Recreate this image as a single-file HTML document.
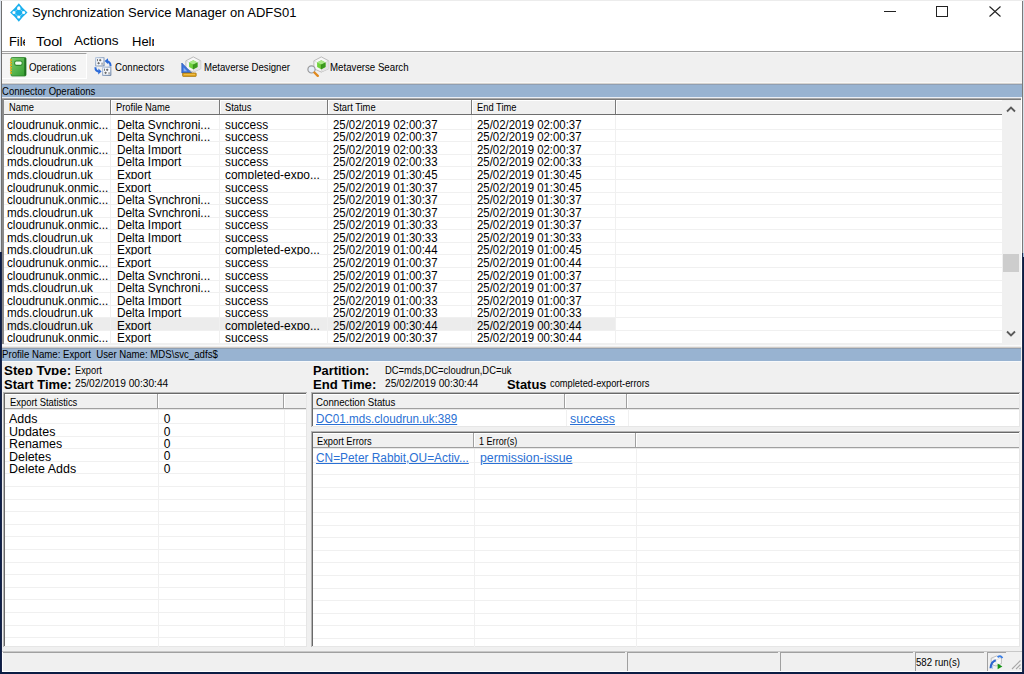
<!DOCTYPE html>
<html><head><meta charset="utf-8"><style>
html,body{margin:0;padding:0;}
body{width:1024px;height:674px;position:relative;overflow:hidden;background:#0c1e46;font-family:"Liberation Sans", sans-serif;}
body div, body svg{position:absolute;}
.t{white-space:pre;}
</style></head><body>
<div style="left:0;top:0;width:1px;height:252px;background:#dce3ec"></div>
<div style="left:1023px;top:0;width:1px;height:253px;background:#d6e0ea"></div>
<div style="left:1023px;top:253px;width:1px;height:4px;background:#9fbfe0"></div>
<div style="left:1px;top:0px;width:1022px;height:672px;background:#f0f0f0"></div>
<div style="left:1px;top:0px;width:1022px;height:1px;background:#ececec"></div>
<div style="left:1px;top:1px;width:1px;height:251px;background:#6f6f6f"></div>
<div style="left:1px;top:252px;width:1px;height:420px;background:#1a2548"></div>
<div style="left:1022px;top:1px;width:1px;height:252px;background:#7a7a7a"></div>
<div style="left:1022px;top:253px;width:1px;height:419px;background:#1f2a4a"></div>
<div style="left:2px;top:1px;width:1020px;height:50px;background:#fff"></div>
<svg style="left:10px;top:2.7px" width="18" height="19" viewBox="0 0 18 19">
<path d="M8.8 0.3 Q12.6 5.3 17.5 9.6 Q12.6 13.9 8.8 18.7 Q5 13.9 0.1 9.6 Q5 5.3 8.8 0.3 Z" fill="#1bb0ee"/>
<path d="M8.8 5.2 L13.8 9.6 L8.8 14.1 L3.8 9.6 Z" fill="none" stroke="#fff" stroke-width="0.6" opacity="0.8"/>
<ellipse cx="8.8" cy="9.6" rx="2.7" ry="2.0" fill="#1bb0ee"/>
<ellipse cx="8.8" cy="5.2" rx="1.6" ry="1.9" fill="#fff"/><circle cx="3.9" cy="9.6" r="1.5" fill="#fff"/>
<circle cx="13.7" cy="9.6" r="1.5" fill="#fff"/><circle cx="8.8" cy="14" r="1.6" fill="#fff"/>
</svg>
<div class="t" style="left:32.20px;top:6px;font-size:13px;line-height:14.521px;color:#000;transform:scaleX(0.9997);transform-origin:0 0;">Synchronization Service Manager on ADFS01</div>
<div style="left:884px;top:11px;width:12px;height:1px;background:#222"></div>
<div style="left:936px;top:6px;width:10px;height:9px;border:1px solid #222"></div>
<svg style="left:989px;top:6px" width="12" height="11" viewBox="0 0 12 11"><path d="M0.5 0.5 L11.5 10.5 M11.5 0.5 L0.5 10.5" stroke="#222" stroke-width="1.1"/></svg>
<div style="left:8px;top:30px;width:16.6px;height:15.5px;overflow:hidden">
<div class="t" style="left:0.9px;top:5px;font-size:13px;line-height:14.521px;color:#000;">File</div>
</div>
<div style="left:36px;top:30px;width:25.6px;height:15.5px;overflow:hidden">
<div class="t" style="left:0.24px;top:5px;font-size:13px;line-height:14.521px;color:#000;transform:scaleX(1.1028);transform-origin:0 0;">Tools</div>
</div>
<div class="t" style="left:74.17px;top:34px;font-size:13px;line-height:14.521px;color:#000;transform:scaleX(1.0438);transform-origin:0 0;">Actions</div>
<div style="left:131px;top:30px;width:23px;height:15.5px;overflow:hidden">
<div class="t" style="left:1px;top:5px;font-size:13px;line-height:14.521px;color:#000;">Help</div>
</div>
<div style="left:2px;top:51px;width:1020px;height:1px;background:#a0a0a0"></div>
<div style="left:2px;top:52px;width:1020px;height:1px;background:#f7f7f7"></div>
<div style="left:2px;top:53px;width:1020px;height:30px;background:#f0f0f0"></div>
<div style="left:2px;top:53px;width:85px;height:26px;background:#f5f5f5;border-top:1px solid #a0a0a0;border-right:1px solid #fff;border-bottom:1px solid #fff;box-sizing:border-box"></div>
<div style="left:2px;top:82px;width:1020px;height:1px;background:#f7f7f7"></div>
<div style="left:2px;top:83px;width:1020px;height:1px;background:#d6d3cf"></div>
<div style="left:2px;top:84px;width:1020px;height:1px;background:#909fb2"></div>
<svg style="left:9px;top:57px" width="18" height="20" viewBox="0 0 18 20">
<defs><linearGradient id="gN" x1="0" y1="0" x2="1" y2="1"><stop offset="0" stop-color="#7fcf6f"/><stop offset="1" stop-color="#2f9a2c"/></linearGradient></defs>
<rect x="2" y="0.5" width="15" height="18.5" rx="1.2" fill="url(#gN)" stroke="#2a7f28" stroke-width="0.8"/>
<rect x="15.3" y="1" width="1.6" height="17.5" fill="#1f6e1f"/>
<rect x="5.6" y="4" width="7.6" height="4.4" rx="1.8" fill="#f4fff0" stroke="#2f8a2c" stroke-width="1.1"/>
<g fill="#e2b21c"><circle cx="2" cy="3" r="1.1"/><circle cx="2" cy="5.6" r="1.1"/><circle cx="2" cy="8.2" r="1.1"/><circle cx="2" cy="10.8" r="1.1"/><circle cx="2" cy="13.4" r="1.1"/><circle cx="2" cy="16" r="1.1"/></g>
</svg>
<div class="t" style="left:29.47px;top:61px;font-size:11px;line-height:12.287px;color:#000;transform:scaleX(0.8772);transform-origin:0 0;">Operations</div>
<svg style="left:93px;top:56px" width="20" height="21" viewBox="0 0 20 21">
<defs><linearGradient id="gC" x1="0" y1="0" x2="1" y2="1"><stop offset="0" stop-color="#c4d2e6"/><stop offset="1" stop-color="#6f86a6"/></linearGradient></defs>
<rect x="2" y="1" width="9.6" height="9.6" rx="1" fill="url(#gC)"/><rect x="3.2" y="2.2" width="7.2" height="7.2" fill="#f5f8fc"/>
<rect x="9" y="10.6" width="9.4" height="9.4" rx="1" fill="url(#gC)"/><rect x="10.2" y="11.8" width="7" height="7" fill="#f5f8fc"/>
<g fill="#6a6a6a"><path d="M7.2 2.8 L8.6 4.2 L7.2 5.6 L5.8 4.2 Z"/><path d="M5.6 5.8 L7 7.2 L5.6 8.6 L4.2 7.2 Z"/><rect x="4" y="3" width="0.9" height="2.2"/><rect x="8.6" y="6.6" width="0.9" height="2.2"/>
<path d="M14.2 12.4 L15.6 13.8 L14.2 15.2 L12.8 13.8 Z"/><path d="M12.6 15.4 L14 16.8 L12.6 18.2 L11.2 16.8 Z"/><rect x="11" y="12.6" width="0.9" height="2.2"/><rect x="15.6" y="16.2" width="0.9" height="2.2"/></g>
<path d="M13.5 5.2 Q17.6 5.6 17.6 10.2" fill="none" stroke="#2b6ad8" stroke-width="2"/><path d="M11.6 5.1 L15 2.2 L15.2 8.2 Z" fill="#2b6ad8"/>
<path d="M2.4 11.2 Q2.4 15.4 6.6 15.6" fill="none" stroke="#2b6ad8" stroke-width="2"/><path d="M8.6 15.6 L5.4 12.6 L5.2 18.6 Z" fill="#2b6ad8"/>
</svg>
<div class="t" style="left:114.97px;top:61px;font-size:11px;line-height:12.287px;color:#000;transform:scaleX(0.8764);transform-origin:0 0;">Connectors</div>
<svg style="left:180px;top:55px" width="22" height="23" viewBox="0 0 22 23">
<g transform="translate(5.5,1.5)">
<path d="M7.8 0.4 L15.2 4.3 L15.2 12.2 L7.8 15.6 L0.4 12.2 L0.4 4.3 Z" fill="#f7f7f7" stroke="#b4b4b4" stroke-width="0.9"/>
<path d="M15.2 4.3 L15.2 12.2 L7.8 15.6 L7.8 8 Z" fill="#e4e4e4"/>
<path d="M0.4 4.3 L7.8 8 L15.2 4.3 M7.8 8 L7.8 15.6" fill="none" stroke="#d0d0d0" stroke-width="0.6"/>
<path d="M7.8 3.8 L12 5.9 L12 10.6 L7.8 12.7 L3.6 10.6 L3.6 5.9 Z" fill="#6fd23c"/>
<path d="M7.8 3.8 L12 5.9 L7.8 8 L3.6 5.9 Z" fill="#a8e888"/><path d="M7.8 8 L12 5.9 L12 10.6 L7.8 12.7 Z" fill="#3a9a1e"/>
<path d="M7.8 8 L7.8 12.7" stroke="#2a6e14" stroke-width="0.6"/>
</g>
<path d="M1.8 8 L1.8 17.9 L11.6 17.9 Z" fill="#3c74dc" stroke="#2556b8" stroke-width="0.7"/>
<path d="M3.6 12.6 L3.6 16.3 L7.2 16.3 Z" fill="#8fb4f0"/>
<rect x="2.6" y="18" width="13.6" height="3.4" rx="0.6" fill="#e6a81e" stroke="#9a6c08" stroke-width="0.7"/>
<path d="M4 19.4 L15 19.4" stroke="#f6d070" stroke-width="0.6"/>
</svg>
<div class="t" style="left:203.78px;top:61px;font-size:11px;line-height:12.287px;color:#000;transform:scaleX(0.8737);transform-origin:0 0;">Metaverse Designer</div>
<svg style="left:306px;top:55px" width="24" height="23" viewBox="0 0 24 23">
<g transform="translate(7.5,1.5)">
<path d="M7.8 0.4 L15.2 4.3 L15.2 12.2 L7.8 15.6 L0.4 12.2 L0.4 4.3 Z" fill="#f7f7f7" stroke="#b4b4b4" stroke-width="0.9"/>
<path d="M15.2 4.3 L15.2 12.2 L7.8 15.6 L7.8 8 Z" fill="#e4e4e4"/>
<path d="M0.4 4.3 L7.8 8 L15.2 4.3 M7.8 8 L7.8 15.6" fill="none" stroke="#d0d0d0" stroke-width="0.6"/>
<path d="M7.8 3.8 L12 5.9 L12 10.6 L7.8 12.7 L3.6 10.6 L3.6 5.9 Z" fill="#6fd23c"/>
<path d="M7.8 3.8 L12 5.9 L7.8 8 L3.6 5.9 Z" fill="#a8e888"/><path d="M7.8 8 L12 5.9 L12 10.6 L7.8 12.7 Z" fill="#3a9a1e"/>
<path d="M7.8 8 L7.8 12.7" stroke="#2a6e14" stroke-width="0.6"/>
</g>
<circle cx="5.5" cy="14.4" r="3.6" fill="#e6eefa" stroke="#9a9a9a" stroke-width="1.2"/>
<path d="M8.4 17.5 L11.8 20.8" stroke="#e08a20" stroke-width="2.4" stroke-linecap="round"/>
</svg>
<div class="t" style="left:330.47px;top:61px;font-size:11px;line-height:12.287px;color:#000;transform:scaleX(0.8806);transform-origin:0 0;">Metaverse Search</div>
<div style="left:2px;top:85px;width:1020px;height:12px;background:#98b3d1"></div>
<div style="left:2px;top:85px;width:1020px;height:12px;overflow:hidden">
<div class="t" style="left:-0.12px;top:0px;font-size:11px;line-height:12.287px;color:#000;transform:scaleX(0.8670);transform-origin:0 0;">Connector Operations</div>
</div>
<div style="left:2px;top:97px;width:1020px;height:1px;background:#e9eef5"></div>
<div style="left:2px;top:98px;width:1020px;height:1px;background:#a8a8a8"></div>
<div style="left:2px;top:99px;width:1001px;height:245px;background:#fff"></div>
<div style="left:2px;top:99px;width:1019px;height:1px;background:#7a7a7a"></div>
<div style="left:2px;top:99px;width:2px;height:245px;background:#8a8a8a"></div>
<div style="left:4px;top:100px;width:999px;height:14px;background:#f0f0f0;border-top:1px solid #fff;box-sizing:border-box"></div>
<div style="left:4px;top:114px;width:998px;height:1px;background:#6e6e6e"></div>
<div style="left:110px;top:100px;width:1px;height:14px;background:#7a7a7a"></div>
<div style="left:111px;top:100px;width:1px;height:14px;background:#fff"></div>
<div style="left:219px;top:100px;width:1px;height:14px;background:#7a7a7a"></div>
<div style="left:220px;top:100px;width:1px;height:14px;background:#fff"></div>
<div style="left:327px;top:100px;width:1px;height:14px;background:#7a7a7a"></div>
<div style="left:328px;top:100px;width:1px;height:14px;background:#fff"></div>
<div style="left:471px;top:100px;width:1px;height:14px;background:#7a7a7a"></div>
<div style="left:472px;top:100px;width:1px;height:14px;background:#fff"></div>
<div style="left:615px;top:100px;width:1px;height:14px;background:#7a7a7a"></div>
<div style="left:616px;top:100px;width:1px;height:14px;background:#fff"></div>
<div class="t" style="left:8.79px;top:101px;font-size:11px;line-height:12.287px;color:#000;transform:scaleX(0.8494);transform-origin:0 0;">Name</div>
<div class="t" style="left:116.49px;top:101px;font-size:11px;line-height:12.287px;color:#000;transform:scaleX(0.8494);transform-origin:0 0;">Profile Name</div>
<div class="t" style="left:224.79px;top:101px;font-size:11px;line-height:12.287px;color:#000;transform:scaleX(0.8494);transform-origin:0 0;">Status</div>
<div class="t" style="left:332.69px;top:101px;font-size:11px;line-height:12.287px;color:#000;transform:scaleX(0.8494);transform-origin:0 0;">Start Time</div>
<div class="t" style="left:476.99px;top:101px;font-size:11px;line-height:12.287px;color:#000;transform:scaleX(0.8494);transform-origin:0 0;">End Time</div>
<div style="left:4px;top:115px;width:998px;height:228px;overflow:hidden">
<div style="left:0;top:13.68px;width:998px;height:1px;background:#f0f0f0"></div>
<div style="left:0;top:26.26px;width:998px;height:1px;background:#f0f0f0"></div>
<div style="left:0;top:38.84px;width:998px;height:1px;background:#f0f0f0"></div>
<div style="left:0;top:51.42px;width:998px;height:1px;background:#f0f0f0"></div>
<div style="left:0;top:64.00px;width:998px;height:1px;background:#f0f0f0"></div>
<div style="left:0;top:76.58px;width:998px;height:1px;background:#f0f0f0"></div>
<div style="left:0;top:89.16px;width:998px;height:1px;background:#f0f0f0"></div>
<div style="left:0;top:101.74px;width:998px;height:1px;background:#f0f0f0"></div>
<div style="left:0;top:114.32px;width:998px;height:1px;background:#f0f0f0"></div>
<div style="left:0;top:126.90px;width:998px;height:1px;background:#f0f0f0"></div>
<div style="left:0;top:139.48px;width:998px;height:1px;background:#f0f0f0"></div>
<div style="left:0;top:152.06px;width:998px;height:1px;background:#f0f0f0"></div>
<div style="left:0;top:164.64px;width:998px;height:1px;background:#f0f0f0"></div>
<div style="left:0;top:177.22px;width:998px;height:1px;background:#f0f0f0"></div>
<div style="left:0;top:189.80px;width:998px;height:1px;background:#f0f0f0"></div>
<div style="left:0;top:202.38px;width:998px;height:1px;background:#f0f0f0"></div>
<div style="left:1px;top:202.88px;width:610px;height:12.58px;background:#ececec"></div>
<div style="left:0;top:214.96px;width:998px;height:1px;background:#f0f0f0"></div>
<div style="left:0;top:227.54px;width:998px;height:1px;background:#f0f0f0"></div>
<div style="left:106px;top:0;width:1px;height:228px;background:#f0f0f0"></div>
<div style="left:215px;top:0;width:1px;height:228px;background:#f0f0f0"></div>
<div style="left:323px;top:0;width:1px;height:228px;background:#f0f0f0"></div>
<div style="left:467px;top:0;width:1px;height:228px;background:#f0f0f0"></div>
<div style="left:611px;top:0;width:1px;height:228px;background:#f0f0f0"></div>
<div style="left:2.70px;top:1.60px;width:106px;height:12.58px;overflow:hidden">
<div class="t" style="left:0.42px;top:2px;font-size:12px;line-height:13.404px;color:#000;transform:scaleX(0.9736);transform-origin:0 0;">cloudrunuk.onmic...</div>
</div>
<div style="left:112.20px;top:1.60px;width:108px;height:12.58px;overflow:hidden">
<div class="t" style="left:0.41px;top:2px;font-size:12px;line-height:13.404px;color:#000;transform:scaleX(0.9840);transform-origin:0 0;">Delta Synchroni...</div>
</div>
<div style="left:220.60px;top:1.60px;width:108px;height:12.58px;overflow:hidden">
<div class="t" style="left:0.40px;top:2px;font-size:12px;line-height:13.404px;color:#000;transform:scaleX(0.9949);transform-origin:0 0;">success</div>
</div>
<div style="left:328.20px;top:1.60px;width:144px;height:12.58px;overflow:hidden">
<div class="t" style="left:0.43px;top:2px;font-size:12px;line-height:13.404px;color:#000;transform:scaleX(0.9491);transform-origin:0 0;">25/02/2019 02:00:37</div>
</div>
<div style="left:472.50px;top:1.60px;width:144px;height:12.58px;overflow:hidden">
<div class="t" style="left:0.43px;top:2px;font-size:12px;line-height:13.404px;color:#000;transform:scaleX(0.9491);transform-origin:0 0;">25/02/2019 02:00:37</div>
</div>
<div style="left:2.70px;top:14.18px;width:106px;height:12.58px;overflow:hidden">
<div class="t" style="left:0.42px;top:2px;font-size:12px;line-height:13.404px;color:#000;transform:scaleX(0.9736);transform-origin:0 0;">mds.cloudrun.uk</div>
</div>
<div style="left:112.20px;top:14.18px;width:108px;height:12.58px;overflow:hidden">
<div class="t" style="left:0.41px;top:2px;font-size:12px;line-height:13.404px;color:#000;transform:scaleX(0.9840);transform-origin:0 0;">Delta Synchroni...</div>
</div>
<div style="left:220.60px;top:14.18px;width:108px;height:12.58px;overflow:hidden">
<div class="t" style="left:0.40px;top:2px;font-size:12px;line-height:13.404px;color:#000;transform:scaleX(0.9949);transform-origin:0 0;">success</div>
</div>
<div style="left:328.20px;top:14.18px;width:144px;height:12.58px;overflow:hidden">
<div class="t" style="left:0.43px;top:2px;font-size:12px;line-height:13.404px;color:#000;transform:scaleX(0.9491);transform-origin:0 0;">25/02/2019 02:00:37</div>
</div>
<div style="left:472.50px;top:14.18px;width:144px;height:12.58px;overflow:hidden">
<div class="t" style="left:0.43px;top:2px;font-size:12px;line-height:13.404px;color:#000;transform:scaleX(0.9491);transform-origin:0 0;">25/02/2019 02:00:37</div>
</div>
<div style="left:2.70px;top:26.76px;width:106px;height:12.58px;overflow:hidden">
<div class="t" style="left:0.42px;top:2px;font-size:12px;line-height:13.404px;color:#000;transform:scaleX(0.9736);transform-origin:0 0;">cloudrunuk.onmic...</div>
</div>
<div style="left:112.20px;top:26.76px;width:108px;height:12.58px;overflow:hidden">
<div class="t" style="left:0.41px;top:2px;font-size:12px;line-height:13.404px;color:#000;transform:scaleX(0.9840);transform-origin:0 0;">Delta Import</div>
</div>
<div style="left:220.60px;top:26.76px;width:108px;height:12.58px;overflow:hidden">
<div class="t" style="left:0.40px;top:2px;font-size:12px;line-height:13.404px;color:#000;transform:scaleX(0.9949);transform-origin:0 0;">success</div>
</div>
<div style="left:328.20px;top:26.76px;width:144px;height:12.58px;overflow:hidden">
<div class="t" style="left:0.43px;top:2px;font-size:12px;line-height:13.404px;color:#000;transform:scaleX(0.9491);transform-origin:0 0;">25/02/2019 02:00:33</div>
</div>
<div style="left:472.50px;top:26.76px;width:144px;height:12.58px;overflow:hidden">
<div class="t" style="left:0.43px;top:2px;font-size:12px;line-height:13.404px;color:#000;transform:scaleX(0.9491);transform-origin:0 0;">25/02/2019 02:00:37</div>
</div>
<div style="left:2.70px;top:39.34px;width:106px;height:12.58px;overflow:hidden">
<div class="t" style="left:0.42px;top:2px;font-size:12px;line-height:13.404px;color:#000;transform:scaleX(0.9736);transform-origin:0 0;">mds.cloudrun.uk</div>
</div>
<div style="left:112.20px;top:39.34px;width:108px;height:12.58px;overflow:hidden">
<div class="t" style="left:0.41px;top:2px;font-size:12px;line-height:13.404px;color:#000;transform:scaleX(0.9840);transform-origin:0 0;">Delta Import</div>
</div>
<div style="left:220.60px;top:39.34px;width:108px;height:12.58px;overflow:hidden">
<div class="t" style="left:0.40px;top:2px;font-size:12px;line-height:13.404px;color:#000;transform:scaleX(0.9949);transform-origin:0 0;">success</div>
</div>
<div style="left:328.20px;top:39.34px;width:144px;height:12.58px;overflow:hidden">
<div class="t" style="left:0.43px;top:2px;font-size:12px;line-height:13.404px;color:#000;transform:scaleX(0.9491);transform-origin:0 0;">25/02/2019 02:00:33</div>
</div>
<div style="left:472.50px;top:39.34px;width:144px;height:12.58px;overflow:hidden">
<div class="t" style="left:0.43px;top:2px;font-size:12px;line-height:13.404px;color:#000;transform:scaleX(0.9491);transform-origin:0 0;">25/02/2019 02:00:33</div>
</div>
<div style="left:2.70px;top:51.92px;width:106px;height:12.58px;overflow:hidden">
<div class="t" style="left:0.42px;top:2px;font-size:12px;line-height:13.404px;color:#000;transform:scaleX(0.9736);transform-origin:0 0;">mds.cloudrun.uk</div>
</div>
<div style="left:112.20px;top:51.92px;width:108px;height:12.58px;overflow:hidden">
<div class="t" style="left:0.41px;top:2px;font-size:12px;line-height:13.404px;color:#000;transform:scaleX(0.9840);transform-origin:0 0;">Export</div>
</div>
<div style="left:220.60px;top:51.92px;width:108px;height:12.58px;overflow:hidden">
<div class="t" style="left:0.40px;top:2px;font-size:12px;line-height:13.404px;color:#000;transform:scaleX(0.9949);transform-origin:0 0;">completed-expo...</div>
</div>
<div style="left:328.20px;top:51.92px;width:144px;height:12.58px;overflow:hidden">
<div class="t" style="left:0.43px;top:2px;font-size:12px;line-height:13.404px;color:#000;transform:scaleX(0.9491);transform-origin:0 0;">25/02/2019 01:30:45</div>
</div>
<div style="left:472.50px;top:51.92px;width:144px;height:12.58px;overflow:hidden">
<div class="t" style="left:0.43px;top:2px;font-size:12px;line-height:13.404px;color:#000;transform:scaleX(0.9491);transform-origin:0 0;">25/02/2019 01:30:45</div>
</div>
<div style="left:2.70px;top:64.50px;width:106px;height:12.58px;overflow:hidden">
<div class="t" style="left:0.42px;top:2px;font-size:12px;line-height:13.404px;color:#000;transform:scaleX(0.9736);transform-origin:0 0;">cloudrunuk.onmic...</div>
</div>
<div style="left:112.20px;top:64.50px;width:108px;height:12.58px;overflow:hidden">
<div class="t" style="left:0.41px;top:2px;font-size:12px;line-height:13.404px;color:#000;transform:scaleX(0.9840);transform-origin:0 0;">Export</div>
</div>
<div style="left:220.60px;top:64.50px;width:108px;height:12.58px;overflow:hidden">
<div class="t" style="left:0.40px;top:2px;font-size:12px;line-height:13.404px;color:#000;transform:scaleX(0.9949);transform-origin:0 0;">success</div>
</div>
<div style="left:328.20px;top:64.50px;width:144px;height:12.58px;overflow:hidden">
<div class="t" style="left:0.43px;top:2px;font-size:12px;line-height:13.404px;color:#000;transform:scaleX(0.9491);transform-origin:0 0;">25/02/2019 01:30:37</div>
</div>
<div style="left:472.50px;top:64.50px;width:144px;height:12.58px;overflow:hidden">
<div class="t" style="left:0.43px;top:2px;font-size:12px;line-height:13.404px;color:#000;transform:scaleX(0.9491);transform-origin:0 0;">25/02/2019 01:30:45</div>
</div>
<div style="left:2.70px;top:77.08px;width:106px;height:12.58px;overflow:hidden">
<div class="t" style="left:0.42px;top:2px;font-size:12px;line-height:13.404px;color:#000;transform:scaleX(0.9736);transform-origin:0 0;">cloudrunuk.onmic...</div>
</div>
<div style="left:112.20px;top:77.08px;width:108px;height:12.58px;overflow:hidden">
<div class="t" style="left:0.41px;top:2px;font-size:12px;line-height:13.404px;color:#000;transform:scaleX(0.9840);transform-origin:0 0;">Delta Synchroni...</div>
</div>
<div style="left:220.60px;top:77.08px;width:108px;height:12.58px;overflow:hidden">
<div class="t" style="left:0.40px;top:2px;font-size:12px;line-height:13.404px;color:#000;transform:scaleX(0.9949);transform-origin:0 0;">success</div>
</div>
<div style="left:328.20px;top:77.08px;width:144px;height:12.58px;overflow:hidden">
<div class="t" style="left:0.43px;top:2px;font-size:12px;line-height:13.404px;color:#000;transform:scaleX(0.9491);transform-origin:0 0;">25/02/2019 01:30:37</div>
</div>
<div style="left:472.50px;top:77.08px;width:144px;height:12.58px;overflow:hidden">
<div class="t" style="left:0.43px;top:2px;font-size:12px;line-height:13.404px;color:#000;transform:scaleX(0.9491);transform-origin:0 0;">25/02/2019 01:30:37</div>
</div>
<div style="left:2.70px;top:89.66px;width:106px;height:12.58px;overflow:hidden">
<div class="t" style="left:0.42px;top:2px;font-size:12px;line-height:13.404px;color:#000;transform:scaleX(0.9736);transform-origin:0 0;">mds.cloudrun.uk</div>
</div>
<div style="left:112.20px;top:89.66px;width:108px;height:12.58px;overflow:hidden">
<div class="t" style="left:0.41px;top:2px;font-size:12px;line-height:13.404px;color:#000;transform:scaleX(0.9840);transform-origin:0 0;">Delta Synchroni...</div>
</div>
<div style="left:220.60px;top:89.66px;width:108px;height:12.58px;overflow:hidden">
<div class="t" style="left:0.40px;top:2px;font-size:12px;line-height:13.404px;color:#000;transform:scaleX(0.9949);transform-origin:0 0;">success</div>
</div>
<div style="left:328.20px;top:89.66px;width:144px;height:12.58px;overflow:hidden">
<div class="t" style="left:0.43px;top:2px;font-size:12px;line-height:13.404px;color:#000;transform:scaleX(0.9491);transform-origin:0 0;">25/02/2019 01:30:37</div>
</div>
<div style="left:472.50px;top:89.66px;width:144px;height:12.58px;overflow:hidden">
<div class="t" style="left:0.43px;top:2px;font-size:12px;line-height:13.404px;color:#000;transform:scaleX(0.9491);transform-origin:0 0;">25/02/2019 01:30:37</div>
</div>
<div style="left:2.70px;top:102.24px;width:106px;height:12.58px;overflow:hidden">
<div class="t" style="left:0.42px;top:2px;font-size:12px;line-height:13.404px;color:#000;transform:scaleX(0.9736);transform-origin:0 0;">cloudrunuk.onmic...</div>
</div>
<div style="left:112.20px;top:102.24px;width:108px;height:12.58px;overflow:hidden">
<div class="t" style="left:0.41px;top:2px;font-size:12px;line-height:13.404px;color:#000;transform:scaleX(0.9840);transform-origin:0 0;">Delta Import</div>
</div>
<div style="left:220.60px;top:102.24px;width:108px;height:12.58px;overflow:hidden">
<div class="t" style="left:0.40px;top:2px;font-size:12px;line-height:13.404px;color:#000;transform:scaleX(0.9949);transform-origin:0 0;">success</div>
</div>
<div style="left:328.20px;top:102.24px;width:144px;height:12.58px;overflow:hidden">
<div class="t" style="left:0.43px;top:2px;font-size:12px;line-height:13.404px;color:#000;transform:scaleX(0.9491);transform-origin:0 0;">25/02/2019 01:30:33</div>
</div>
<div style="left:472.50px;top:102.24px;width:144px;height:12.58px;overflow:hidden">
<div class="t" style="left:0.43px;top:2px;font-size:12px;line-height:13.404px;color:#000;transform:scaleX(0.9491);transform-origin:0 0;">25/02/2019 01:30:37</div>
</div>
<div style="left:2.70px;top:114.82px;width:106px;height:12.58px;overflow:hidden">
<div class="t" style="left:0.42px;top:2px;font-size:12px;line-height:13.404px;color:#000;transform:scaleX(0.9736);transform-origin:0 0;">mds.cloudrun.uk</div>
</div>
<div style="left:112.20px;top:114.82px;width:108px;height:12.58px;overflow:hidden">
<div class="t" style="left:0.41px;top:2px;font-size:12px;line-height:13.404px;color:#000;transform:scaleX(0.9840);transform-origin:0 0;">Delta Import</div>
</div>
<div style="left:220.60px;top:114.82px;width:108px;height:12.58px;overflow:hidden">
<div class="t" style="left:0.40px;top:2px;font-size:12px;line-height:13.404px;color:#000;transform:scaleX(0.9949);transform-origin:0 0;">success</div>
</div>
<div style="left:328.20px;top:114.82px;width:144px;height:12.58px;overflow:hidden">
<div class="t" style="left:0.43px;top:2px;font-size:12px;line-height:13.404px;color:#000;transform:scaleX(0.9491);transform-origin:0 0;">25/02/2019 01:30:33</div>
</div>
<div style="left:472.50px;top:114.82px;width:144px;height:12.58px;overflow:hidden">
<div class="t" style="left:0.43px;top:2px;font-size:12px;line-height:13.404px;color:#000;transform:scaleX(0.9491);transform-origin:0 0;">25/02/2019 01:30:33</div>
</div>
<div style="left:2.70px;top:127.40px;width:106px;height:12.58px;overflow:hidden">
<div class="t" style="left:0.42px;top:2px;font-size:12px;line-height:13.404px;color:#000;transform:scaleX(0.9736);transform-origin:0 0;">mds.cloudrun.uk</div>
</div>
<div style="left:112.20px;top:127.40px;width:108px;height:12.58px;overflow:hidden">
<div class="t" style="left:0.41px;top:2px;font-size:12px;line-height:13.404px;color:#000;transform:scaleX(0.9840);transform-origin:0 0;">Export</div>
</div>
<div style="left:220.60px;top:127.40px;width:108px;height:12.58px;overflow:hidden">
<div class="t" style="left:0.40px;top:2px;font-size:12px;line-height:13.404px;color:#000;transform:scaleX(0.9949);transform-origin:0 0;">completed-expo...</div>
</div>
<div style="left:328.20px;top:127.40px;width:144px;height:12.58px;overflow:hidden">
<div class="t" style="left:0.43px;top:2px;font-size:12px;line-height:13.404px;color:#000;transform:scaleX(0.9491);transform-origin:0 0;">25/02/2019 01:00:44</div>
</div>
<div style="left:472.50px;top:127.40px;width:144px;height:12.58px;overflow:hidden">
<div class="t" style="left:0.43px;top:2px;font-size:12px;line-height:13.404px;color:#000;transform:scaleX(0.9491);transform-origin:0 0;">25/02/2019 01:00:45</div>
</div>
<div style="left:2.70px;top:139.98px;width:106px;height:12.58px;overflow:hidden">
<div class="t" style="left:0.42px;top:2px;font-size:12px;line-height:13.404px;color:#000;transform:scaleX(0.9736);transform-origin:0 0;">cloudrunuk.onmic...</div>
</div>
<div style="left:112.20px;top:139.98px;width:108px;height:12.58px;overflow:hidden">
<div class="t" style="left:0.41px;top:2px;font-size:12px;line-height:13.404px;color:#000;transform:scaleX(0.9840);transform-origin:0 0;">Export</div>
</div>
<div style="left:220.60px;top:139.98px;width:108px;height:12.58px;overflow:hidden">
<div class="t" style="left:0.40px;top:2px;font-size:12px;line-height:13.404px;color:#000;transform:scaleX(0.9949);transform-origin:0 0;">success</div>
</div>
<div style="left:328.20px;top:139.98px;width:144px;height:12.58px;overflow:hidden">
<div class="t" style="left:0.43px;top:2px;font-size:12px;line-height:13.404px;color:#000;transform:scaleX(0.9491);transform-origin:0 0;">25/02/2019 01:00:37</div>
</div>
<div style="left:472.50px;top:139.98px;width:144px;height:12.58px;overflow:hidden">
<div class="t" style="left:0.43px;top:2px;font-size:12px;line-height:13.404px;color:#000;transform:scaleX(0.9491);transform-origin:0 0;">25/02/2019 01:00:44</div>
</div>
<div style="left:2.70px;top:152.56px;width:106px;height:12.58px;overflow:hidden">
<div class="t" style="left:0.42px;top:2px;font-size:12px;line-height:13.404px;color:#000;transform:scaleX(0.9736);transform-origin:0 0;">cloudrunuk.onmic...</div>
</div>
<div style="left:112.20px;top:152.56px;width:108px;height:12.58px;overflow:hidden">
<div class="t" style="left:0.41px;top:2px;font-size:12px;line-height:13.404px;color:#000;transform:scaleX(0.9840);transform-origin:0 0;">Delta Synchroni...</div>
</div>
<div style="left:220.60px;top:152.56px;width:108px;height:12.58px;overflow:hidden">
<div class="t" style="left:0.40px;top:2px;font-size:12px;line-height:13.404px;color:#000;transform:scaleX(0.9949);transform-origin:0 0;">success</div>
</div>
<div style="left:328.20px;top:152.56px;width:144px;height:12.58px;overflow:hidden">
<div class="t" style="left:0.43px;top:2px;font-size:12px;line-height:13.404px;color:#000;transform:scaleX(0.9491);transform-origin:0 0;">25/02/2019 01:00:37</div>
</div>
<div style="left:472.50px;top:152.56px;width:144px;height:12.58px;overflow:hidden">
<div class="t" style="left:0.43px;top:2px;font-size:12px;line-height:13.404px;color:#000;transform:scaleX(0.9491);transform-origin:0 0;">25/02/2019 01:00:37</div>
</div>
<div style="left:2.70px;top:165.14px;width:106px;height:12.58px;overflow:hidden">
<div class="t" style="left:0.42px;top:2px;font-size:12px;line-height:13.404px;color:#000;transform:scaleX(0.9736);transform-origin:0 0;">mds.cloudrun.uk</div>
</div>
<div style="left:112.20px;top:165.14px;width:108px;height:12.58px;overflow:hidden">
<div class="t" style="left:0.41px;top:2px;font-size:12px;line-height:13.404px;color:#000;transform:scaleX(0.9840);transform-origin:0 0;">Delta Synchroni...</div>
</div>
<div style="left:220.60px;top:165.14px;width:108px;height:12.58px;overflow:hidden">
<div class="t" style="left:0.40px;top:2px;font-size:12px;line-height:13.404px;color:#000;transform:scaleX(0.9949);transform-origin:0 0;">success</div>
</div>
<div style="left:328.20px;top:165.14px;width:144px;height:12.58px;overflow:hidden">
<div class="t" style="left:0.43px;top:2px;font-size:12px;line-height:13.404px;color:#000;transform:scaleX(0.9491);transform-origin:0 0;">25/02/2019 01:00:37</div>
</div>
<div style="left:472.50px;top:165.14px;width:144px;height:12.58px;overflow:hidden">
<div class="t" style="left:0.43px;top:2px;font-size:12px;line-height:13.404px;color:#000;transform:scaleX(0.9491);transform-origin:0 0;">25/02/2019 01:00:37</div>
</div>
<div style="left:2.70px;top:177.72px;width:106px;height:12.58px;overflow:hidden">
<div class="t" style="left:0.42px;top:2px;font-size:12px;line-height:13.404px;color:#000;transform:scaleX(0.9736);transform-origin:0 0;">cloudrunuk.onmic...</div>
</div>
<div style="left:112.20px;top:177.72px;width:108px;height:12.58px;overflow:hidden">
<div class="t" style="left:0.41px;top:2px;font-size:12px;line-height:13.404px;color:#000;transform:scaleX(0.9840);transform-origin:0 0;">Delta Import</div>
</div>
<div style="left:220.60px;top:177.72px;width:108px;height:12.58px;overflow:hidden">
<div class="t" style="left:0.40px;top:2px;font-size:12px;line-height:13.404px;color:#000;transform:scaleX(0.9949);transform-origin:0 0;">success</div>
</div>
<div style="left:328.20px;top:177.72px;width:144px;height:12.58px;overflow:hidden">
<div class="t" style="left:0.43px;top:2px;font-size:12px;line-height:13.404px;color:#000;transform:scaleX(0.9491);transform-origin:0 0;">25/02/2019 01:00:33</div>
</div>
<div style="left:472.50px;top:177.72px;width:144px;height:12.58px;overflow:hidden">
<div class="t" style="left:0.43px;top:2px;font-size:12px;line-height:13.404px;color:#000;transform:scaleX(0.9491);transform-origin:0 0;">25/02/2019 01:00:37</div>
</div>
<div style="left:2.70px;top:190.30px;width:106px;height:12.58px;overflow:hidden">
<div class="t" style="left:0.42px;top:2px;font-size:12px;line-height:13.404px;color:#000;transform:scaleX(0.9736);transform-origin:0 0;">mds.cloudrun.uk</div>
</div>
<div style="left:112.20px;top:190.30px;width:108px;height:12.58px;overflow:hidden">
<div class="t" style="left:0.41px;top:2px;font-size:12px;line-height:13.404px;color:#000;transform:scaleX(0.9840);transform-origin:0 0;">Delta Import</div>
</div>
<div style="left:220.60px;top:190.30px;width:108px;height:12.58px;overflow:hidden">
<div class="t" style="left:0.40px;top:2px;font-size:12px;line-height:13.404px;color:#000;transform:scaleX(0.9949);transform-origin:0 0;">success</div>
</div>
<div style="left:328.20px;top:190.30px;width:144px;height:12.58px;overflow:hidden">
<div class="t" style="left:0.43px;top:2px;font-size:12px;line-height:13.404px;color:#000;transform:scaleX(0.9491);transform-origin:0 0;">25/02/2019 01:00:33</div>
</div>
<div style="left:472.50px;top:190.30px;width:144px;height:12.58px;overflow:hidden">
<div class="t" style="left:0.43px;top:2px;font-size:12px;line-height:13.404px;color:#000;transform:scaleX(0.9491);transform-origin:0 0;">25/02/2019 01:00:33</div>
</div>
<div style="left:2.70px;top:202.88px;width:106px;height:12.58px;overflow:hidden">
<div class="t" style="left:0.42px;top:2px;font-size:12px;line-height:13.404px;color:#000;transform:scaleX(0.9736);transform-origin:0 0;">mds.cloudrun.uk</div>
</div>
<div style="left:112.20px;top:202.88px;width:108px;height:12.58px;overflow:hidden">
<div class="t" style="left:0.41px;top:2px;font-size:12px;line-height:13.404px;color:#000;transform:scaleX(0.9840);transform-origin:0 0;">Export</div>
</div>
<div style="left:220.60px;top:202.88px;width:108px;height:12.58px;overflow:hidden">
<div class="t" style="left:0.40px;top:2px;font-size:12px;line-height:13.404px;color:#000;transform:scaleX(0.9949);transform-origin:0 0;">completed-expo...</div>
</div>
<div style="left:328.20px;top:202.88px;width:144px;height:12.58px;overflow:hidden">
<div class="t" style="left:0.43px;top:2px;font-size:12px;line-height:13.404px;color:#000;transform:scaleX(0.9491);transform-origin:0 0;">25/02/2019 00:30:44</div>
</div>
<div style="left:472.50px;top:202.88px;width:144px;height:12.58px;overflow:hidden">
<div class="t" style="left:0.43px;top:2px;font-size:12px;line-height:13.404px;color:#000;transform:scaleX(0.9491);transform-origin:0 0;">25/02/2019 00:30:44</div>
</div>
<div style="left:2.70px;top:215.46px;width:106px;height:12.58px;overflow:hidden">
<div class="t" style="left:0.42px;top:2px;font-size:12px;line-height:13.404px;color:#000;transform:scaleX(0.9736);transform-origin:0 0;">cloudrunuk.onmic...</div>
</div>
<div style="left:112.20px;top:215.46px;width:108px;height:12.58px;overflow:hidden">
<div class="t" style="left:0.41px;top:2px;font-size:12px;line-height:13.404px;color:#000;transform:scaleX(0.9840);transform-origin:0 0;">Export</div>
</div>
<div style="left:220.60px;top:215.46px;width:108px;height:12.58px;overflow:hidden">
<div class="t" style="left:0.40px;top:2px;font-size:12px;line-height:13.404px;color:#000;transform:scaleX(0.9949);transform-origin:0 0;">success</div>
</div>
<div style="left:328.20px;top:215.46px;width:144px;height:12.58px;overflow:hidden">
<div class="t" style="left:0.43px;top:2px;font-size:12px;line-height:13.404px;color:#000;transform:scaleX(0.9491);transform-origin:0 0;">25/02/2019 00:30:37</div>
</div>
<div style="left:472.50px;top:215.46px;width:144px;height:12.58px;overflow:hidden">
<div class="t" style="left:0.43px;top:2px;font-size:12px;line-height:13.404px;color:#000;transform:scaleX(0.9491);transform-origin:0 0;">25/02/2019 00:30:44</div>
</div>
</div>
<div style="left:4px;top:343px;width:999px;height:1px;background:#f0f0f0"></div>
<div style="left:2px;top:344px;width:1019px;height:1px;background:#f0f0f0"></div>
<div style="left:2px;top:345px;width:1019px;height:1px;background:#fafafa"></div>
<div style="left:2px;top:346px;width:1019px;height:1px;background:#ececec"></div>
<div style="left:2px;top:347px;width:1019px;height:1px;background:#d0cbc6"></div>
<div style="left:1002px;top:100px;width:19px;height:244px;background:#f0f0f0"></div>
<div style="left:1021px;top:97px;width:1px;height:250px;background:#fff"></div>
<svg style="left:1006px;top:106px" width="10" height="7" viewBox="0 0 10 7"><path d="M1 5.5 L5 1.5 L9 5.5" fill="none" stroke="#5a5a5a" stroke-width="1.8"/></svg>
<div style="left:1003px;top:254px;width:16px;height:18px;background:#cdcdcd"></div>
<svg style="left:1006px;top:330px" width="10" height="7" viewBox="0 0 10 7"><path d="M1 1.5 L5 5.5 L9 1.5" fill="none" stroke="#5a5a5a" stroke-width="1.8"/></svg>
<div style="left:2px;top:348px;width:1019px;height:1px;background:#909fb2"></div>
<div style="left:2px;top:349px;width:1019px;height:12px;background:#98b3d1"></div>
<div style="left:2px;top:361px;width:1019px;height:1px;background:#f7f9fb"></div>
<div style="left:2px;top:349px;width:1019px;height:12px;overflow:hidden">
<div class="t" style="left:0.27px;top:-1px;font-size:11px;line-height:12.287px;color:#000;transform:scaleX(0.8760);transform-origin:0 0;">Profile Name: Export  User Name: MDS\svc_adfs$</div>
</div>
<div style="left:4px;top:362px;width:70px;height:13px;overflow:hidden">
<div class="t" style="left:0.13px;top:3px;font-size:12px;line-height:13.404px;color:#000;font-weight:bold;transform:scaleX(1.1100);transform-origin:0 0;">Step Type:</div>
</div>
<div class="t" style="left:4.15px;top:379px;font-size:12px;line-height:13.404px;color:#000;font-weight:bold;transform:scaleX(1.0823);transform-origin:0 0;">Start Time:</div>
<div class="t" style="left:75.17px;top:365px;font-size:10.5px;line-height:11.729px;color:#000;transform:scaleX(0.8831);transform-origin:0 0;">Export</div>
<div class="t" style="left:75.02px;top:378px;font-size:10.5px;line-height:11.729px;color:#000;transform:scaleX(0.9674);transform-origin:0 0;">25/02/2019 00:30:44</div>
<div class="t" style="left:312.96px;top:365px;font-size:12px;line-height:13.404px;color:#000;font-weight:bold;transform:scaleX(1.0690);transform-origin:0 0;">Partition:</div>
<div class="t" style="left:312.94px;top:379px;font-size:12px;line-height:13.404px;color:#000;font-weight:bold;transform:scaleX(1.0954);transform-origin:0 0;">End Time:</div>
<div class="t" style="left:385.06px;top:365px;font-size:10.5px;line-height:11.729px;color:#000;transform:scaleX(0.8969);transform-origin:0 0;">DC=mds,DC=cloudrun,DC=uk</div>
<div class="t" style="left:385.02px;top:378px;font-size:10.5px;line-height:11.729px;color:#000;transform:scaleX(0.9674);transform-origin:0 0;">25/02/2019 00:30:44</div>
<div class="t" style="left:506.85px;top:379px;font-size:12px;line-height:13.404px;color:#000;font-weight:bold;transform:scaleX(1.0771);transform-origin:0 0;">Status</div>
<div class="t" style="left:550.17px;top:378px;font-size:10.5px;line-height:11.729px;color:#000;transform:scaleX(0.8881);transform-origin:0 0;">completed-export-errors</div>
<div style="left:4px;top:393px;width:303px;height:254px;background:#fff"></div>
<div style="left:3px;top:392px;width:304px;height:1px;background:#b4b4b4"></div>
<div style="left:3px;top:392px;width:1px;height:255px;background:#b4b4b4"></div>
<div style="left:4px;top:393px;width:302px;height:1px;background:#696969"></div>
<div style="left:4px;top:393px;width:1px;height:253px;background:#696969"></div>
<div style="left:306px;top:393px;width:1px;height:254px;background:#e6e6e6"></div>
<div style="left:4px;top:646px;width:303px;height:1px;background:#e6e6e6"></div>
<div style="left:5px;top:394px;width:301px;height:14px;background:#f0f0f0;border-top:1px solid #fff;box-sizing:border-box"></div>
<div style="left:5px;top:408px;width:301px;height:1px;background:#a0a0a0"></div>
<div style="left:5px;top:409px;width:301px;height:1px;background:#e8e8e8"></div>
<div style="left:157px;top:394px;width:1px;height:14px;background:#a0a0a0"></div>
<div style="left:158px;top:394px;width:1px;height:14px;background:#fff"></div>
<div style="left:283px;top:394px;width:1px;height:14px;background:#a0a0a0"></div>
<div style="left:284px;top:394px;width:1px;height:14px;background:#fff"></div>
<div class="t" style="left:10.46px;top:397px;font-size:10.5px;line-height:11.729px;color:#000;transform:scaleX(0.8941);transform-origin:0 0;">Export Statistics</div>
<div style="left:5px;top:423.00px;width:301px;height:1px;background:#f0f0f0"></div>
<div style="left:5px;top:435.60px;width:301px;height:1px;background:#f0f0f0"></div>
<div style="left:5px;top:448.20px;width:301px;height:1px;background:#f0f0f0"></div>
<div style="left:5px;top:460.80px;width:301px;height:1px;background:#f0f0f0"></div>
<div style="left:5px;top:473.40px;width:301px;height:1px;background:#f0f0f0"></div>
<div style="left:5px;top:486.00px;width:301px;height:1px;background:#f0f0f0"></div>
<div style="left:5px;top:498.60px;width:301px;height:1px;background:#f0f0f0"></div>
<div style="left:5px;top:511.20px;width:301px;height:1px;background:#f0f0f0"></div>
<div style="left:5px;top:523.80px;width:301px;height:1px;background:#f0f0f0"></div>
<div style="left:5px;top:536.40px;width:301px;height:1px;background:#f0f0f0"></div>
<div style="left:5px;top:549.00px;width:301px;height:1px;background:#f0f0f0"></div>
<div style="left:5px;top:561.60px;width:301px;height:1px;background:#f0f0f0"></div>
<div style="left:5px;top:574.20px;width:301px;height:1px;background:#f0f0f0"></div>
<div style="left:5px;top:586.80px;width:301px;height:1px;background:#f0f0f0"></div>
<div style="left:5px;top:599.40px;width:301px;height:1px;background:#f0f0f0"></div>
<div style="left:5px;top:612.00px;width:301px;height:1px;background:#f0f0f0"></div>
<div style="left:5px;top:624.60px;width:301px;height:1px;background:#f0f0f0"></div>
<div style="left:5px;top:637.20px;width:301px;height:1px;background:#f0f0f0"></div>
<div style="left:158px;top:410px;width:1px;height:237px;background:#f0f0f0"></div>
<div style="left:284px;top:410px;width:1px;height:237px;background:#f0f0f0"></div>
<div style="left:8px;top:410.4px;width:140px;height:12.8px;overflow:hidden">
<div class="t" style="left:0.83px;top:3px;font-size:12px;line-height:13.404px;color:#000;transform:scaleX(1.0371);transform-origin:0 0;">Adds</div>
</div>
<div class="t" style="left:163.7px;top:413px;font-size:12px;line-height:13.404px;color:#000;">0</div>
<div style="left:8px;top:422.9px;width:140px;height:12.8px;overflow:hidden">
<div class="t" style="left:0.83px;top:3px;font-size:12px;line-height:13.404px;color:#000;transform:scaleX(1.0371);transform-origin:0 0;">Updates</div>
</div>
<div class="t" style="left:163.7px;top:426px;font-size:12px;line-height:13.404px;color:#000;">0</div>
<div style="left:8px;top:435.4px;width:140px;height:12.8px;overflow:hidden">
<div class="t" style="left:0.83px;top:3px;font-size:12px;line-height:13.404px;color:#000;transform:scaleX(1.0371);transform-origin:0 0;">Renames</div>
</div>
<div class="t" style="left:163.7px;top:438px;font-size:12px;line-height:13.404px;color:#000;">0</div>
<div style="left:8px;top:447.9px;width:140px;height:12.8px;overflow:hidden">
<div class="t" style="left:0.83px;top:3px;font-size:12px;line-height:13.404px;color:#000;transform:scaleX(1.0371);transform-origin:0 0;">Deletes</div>
</div>
<div class="t" style="left:163.7px;top:450px;font-size:12px;line-height:13.404px;color:#000;">0</div>
<div style="left:8px;top:460.4px;width:140px;height:12.8px;overflow:hidden">
<div class="t" style="left:0.83px;top:3px;font-size:12px;line-height:13.404px;color:#000;transform:scaleX(1.0371);transform-origin:0 0;">Delete Adds</div>
</div>
<div class="t" style="left:163.7px;top:463px;font-size:12px;line-height:13.404px;color:#000;">0</div>
<div style="left:312px;top:393px;width:708px;height:34px;background:#fff"></div>
<div style="left:311px;top:392px;width:709px;height:1px;background:#b4b4b4"></div>
<div style="left:311px;top:392px;width:1px;height:35px;background:#b4b4b4"></div>
<div style="left:312px;top:393px;width:707px;height:1px;background:#696969"></div>
<div style="left:312px;top:393px;width:1px;height:33px;background:#696969"></div>
<div style="left:1019px;top:393px;width:1px;height:34px;background:#e6e6e6"></div>
<div style="left:312px;top:426px;width:708px;height:1px;background:#e6e6e6"></div>
<div style="left:313px;top:394px;width:706px;height:14px;background:#f0f0f0;border-top:1px solid #fff;box-sizing:border-box"></div>
<div style="left:313px;top:408px;width:706px;height:1px;background:#a0a0a0"></div>
<div style="left:313px;top:409px;width:706px;height:1px;background:#e8e8e8"></div>
<div style="left:563.5px;top:394px;width:1px;height:14px;background:#a0a0a0"></div>
<div style="left:564.5px;top:394px;width:1px;height:14px;background:#fff"></div>
<div style="left:626px;top:394px;width:1px;height:14px;background:#a0a0a0"></div>
<div style="left:627px;top:394px;width:1px;height:14px;background:#fff"></div>
<div class="t" style="left:316.15px;top:397px;font-size:10.5px;line-height:11.729px;color:#000;transform:scaleX(0.9242);transform-origin:0 0;">Connection Status</div>
<div class="t" style="left:316.22px;top:413px;font-size:12px;line-height:13.404px;color:#2a70d4;transform:scaleX(0.9710);transform-origin:0 0;text-decoration:underline;">DC01.mds.cloudrun.uk:389</div>
<div class="t" style="left:570.18px;top:413px;font-size:12px;line-height:13.404px;color:#2a70d4;transform:scaleX(1.0381);transform-origin:0 0;text-decoration:underline;">success</div>
<div style="left:566px;top:409px;width:1px;height:17px;background:#f0f0f0"></div>
<div style="left:628px;top:409px;width:1px;height:17px;background:#f0f0f0"></div>
<div style="left:312px;top:432px;width:708px;height:215px;background:#fff"></div>
<div style="left:311px;top:431px;width:709px;height:1px;background:#b4b4b4"></div>
<div style="left:311px;top:431px;width:1px;height:216px;background:#b4b4b4"></div>
<div style="left:312px;top:432px;width:707px;height:1px;background:#696969"></div>
<div style="left:312px;top:432px;width:1px;height:214px;background:#696969"></div>
<div style="left:1019px;top:432px;width:1px;height:215px;background:#e6e6e6"></div>
<div style="left:312px;top:646px;width:708px;height:1px;background:#e6e6e6"></div>
<div style="left:313px;top:433px;width:706px;height:14px;background:#f0f0f0;border-top:1px solid #fff;box-sizing:border-box"></div>
<div style="left:313px;top:447px;width:706px;height:1px;background:#a0a0a0"></div>
<div style="left:313px;top:448px;width:706px;height:1px;background:#e8e8e8"></div>
<div style="left:472.6px;top:433px;width:1px;height:14px;background:#a0a0a0"></div>
<div style="left:473.6px;top:433px;width:1px;height:14px;background:#fff"></div>
<div style="left:634.6px;top:433px;width:1px;height:14px;background:#a0a0a0"></div>
<div style="left:635.6px;top:433px;width:1px;height:14px;background:#fff"></div>
<div class="t" style="left:317.07px;top:436px;font-size:10.5px;line-height:11.729px;color:#000;transform:scaleX(0.8828);transform-origin:0 0;">Export Errors</div>
<div class="t" style="left:479.48px;top:436px;font-size:10.5px;line-height:11.729px;color:#000;transform:scaleX(0.8639);transform-origin:0 0;">1 Error(s)</div>
<div style="left:313px;top:461.50px;width:706px;height:1px;background:#f0f0f0"></div>
<div style="left:313px;top:474.10px;width:706px;height:1px;background:#f0f0f0"></div>
<div style="left:313px;top:486.70px;width:706px;height:1px;background:#f0f0f0"></div>
<div style="left:313px;top:499.30px;width:706px;height:1px;background:#f0f0f0"></div>
<div style="left:313px;top:511.90px;width:706px;height:1px;background:#f0f0f0"></div>
<div style="left:313px;top:524.50px;width:706px;height:1px;background:#f0f0f0"></div>
<div style="left:313px;top:537.10px;width:706px;height:1px;background:#f0f0f0"></div>
<div style="left:313px;top:549.70px;width:706px;height:1px;background:#f0f0f0"></div>
<div style="left:313px;top:562.30px;width:706px;height:1px;background:#f0f0f0"></div>
<div style="left:313px;top:574.90px;width:706px;height:1px;background:#f0f0f0"></div>
<div style="left:313px;top:587.50px;width:706px;height:1px;background:#f0f0f0"></div>
<div style="left:313px;top:600.10px;width:706px;height:1px;background:#f0f0f0"></div>
<div style="left:313px;top:612.70px;width:706px;height:1px;background:#f0f0f0"></div>
<div style="left:313px;top:625.30px;width:706px;height:1px;background:#f0f0f0"></div>
<div style="left:313px;top:637.90px;width:706px;height:1px;background:#f0f0f0"></div>
<div style="left:474.4px;top:449px;width:1px;height:198px;background:#f0f0f0"></div>
<div style="left:636.4px;top:449px;width:1px;height:198px;background:#f0f0f0"></div>
<div class="t" style="left:316.21px;top:452px;font-size:12px;line-height:13.404px;color:#2a70d4;transform:scaleX(0.9890);transform-origin:0 0;text-decoration:underline;">CN=Peter Rabbit,OU=Activ...</div>
<div class="t" style="left:479.98px;top:452px;font-size:12px;line-height:13.404px;color:#2a70d4;transform:scaleX(1.0263);transform-origin:0 0;text-decoration:underline;">permission-issue</div>
<div style="left:2px;top:651px;width:1020px;height:1px;background:#c8c8c8"></div>
<div style="left:2px;top:652px;width:1020px;height:19px;background:#f0f0f0"></div>
<div style="left:2px;top:671px;width:1020px;height:1px;background:#fff"></div>
<div style="left:2px;top:652px;width:622.5px;height:1px;background:#a0a0a0"></div>
<div style="left:2px;top:652px;width:1px;height:19px;background:#fff"></div>
<div style="left:627px;top:652px;width:150.5px;height:1px;background:#a0a0a0"></div>
<div style="left:627px;top:652px;width:1px;height:19px;background:#a0a0a0"></div>
<div style="left:780px;top:652px;width:132.5px;height:1px;background:#a0a0a0"></div>
<div style="left:780px;top:652px;width:1px;height:19px;background:#a0a0a0"></div>
<div style="left:915.3px;top:652px;width:69.20000000000005px;height:1px;background:#a0a0a0"></div>
<div style="left:915.3px;top:652px;width:1px;height:19px;background:#a0a0a0"></div>
<div style="left:987.3px;top:652px;width:19.200000000000045px;height:1px;background:#a0a0a0"></div>
<div style="left:987.3px;top:652px;width:1px;height:19px;background:#a0a0a0"></div>
<div class="t" style="left:915.75px;top:657px;font-size:10.5px;line-height:11.729px;color:#000;transform:scaleX(0.9174);transform-origin:0 0;">582 run(s)</div>
<svg style="left:988px;top:654px" width="18" height="17" viewBox="0 0 18 17">
<path d="M3.2 4.2 L8.6 2 L13.4 3.6 L13.4 9.6 L8 12 L3.2 10.2 Z" fill="#fafafa" stroke="#a8a8a8" stroke-width="0.7"/>
<path d="M3.2 4.2 L8 6 L13.4 3.6 M8 6 L8 12" fill="none" stroke="#c8c8c8" stroke-width="0.5"/>
<path d="M9.6 3.2 Q12.6 0.6 14.4 4.2" fill="none" stroke="#3a7ee6" stroke-width="1.8"/>
<path d="M7.8 6.2 Q3 7.6 2.6 14.2" fill="none" stroke="#2c66d0" stroke-width="2.2"/>
<path d="M5.4 11.2 Q3.6 12.8 4.6 15" fill="none" stroke="#9cc0f4" stroke-width="0.8"/>
<path d="M9.6 9.6 L14.4 12.4 L9.6 15.2 Z" fill="#129512"/>
</svg>
<svg style="left:1008px;top:657px" width="13" height="14" viewBox="0 0 13 14"><path d="M12.5 3.5 L4 12 M12.5 7.5 L8 12 M12.5 11 L11.5 12" stroke="#a8a8a8" stroke-width="1.1"/></svg>
<div style="left:0;top:672px;width:1024px;height:2px;background:#0b1d44"></div>
</body></html>
